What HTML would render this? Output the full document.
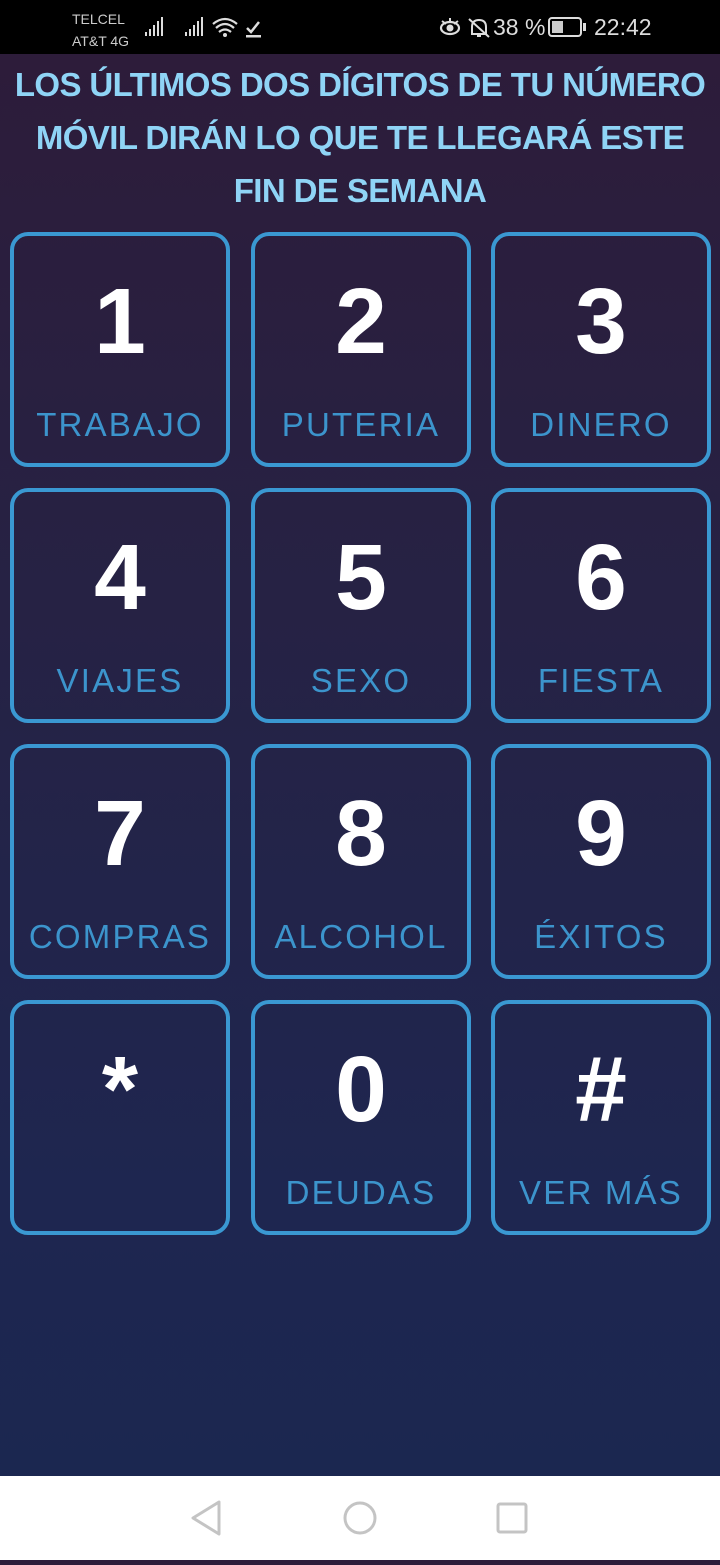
<!DOCTYPE html>
<html><head><meta charset="utf-8"><style>
*{margin:0;padding:0;box-sizing:border-box}
body{width:720px;height:1560px;overflow:hidden;font-family:"Liberation Sans",sans-serif;position:relative;background:linear-gradient(#2d1c3a 54px,#262244 600px,#1e2650 1200px,#1b2750 1476px)}
.sb{position:absolute;top:0;left:0;width:720px;height:54px;background:#000;color:#ddd}
.title{position:absolute;top:58px;left:0;width:720px;text-align:center;color:#8fd4f6;font-weight:bold;font-size:33px;line-height:53px;letter-spacing:-0.6px}
.k{position:absolute;width:220px;height:235px;border:4px solid #3a98d2;border-radius:18px;text-align:center}
.k .d{position:absolute;top:30px;left:0;width:100%;color:#fff;font-weight:bold;font-size:93px;line-height:110px}
.k .l{position:absolute;top:169px;left:0;width:100%;color:#3c94cc;font-size:33px;letter-spacing:2.2px;line-height:40px}
.nav{position:absolute;top:1476px;left:0;width:720px;height:84px;background:#fff}
</style></head><body>
<div class="sb">
<div style="position:absolute;left:72px;top:8px;font-size:14px;line-height:22px;color:#ccc">TELCEL<br>AT&amp;T 4G</div>
<svg style="position:absolute;left:144px;top:16px" width="120" height="24">
<g fill="#ddd"><rect x="1" y="16" width="2" height="4"/><rect x="5" y="13" width="2" height="7"/><rect x="9" y="9" width="2" height="11"/><rect x="13" y="5" width="2" height="15"/><rect x="17" y="1" width="2" height="19"/>
<rect x="41" y="16" width="2" height="4"/><rect x="45" y="13" width="2" height="7"/><rect x="49" y="9" width="2" height="11"/><rect x="53" y="5" width="2" height="15"/><rect x="57" y="1" width="2" height="19"/></g>
<g fill="none" stroke="#ddd" stroke-width="2.2"><path d="M69 8 Q81 -2 93 8"/><path d="M72 12 Q81 4 90 12"/><path d="M75 16 Q81 11 87 16"/></g>
<circle cx="81" cy="19" r="2" fill="#ddd"/>
<path d="M103 12 L107 16 L115 6" stroke="#ddd" stroke-width="2.5" fill="none"/><rect x="102" y="19" width="15" height="2.5" fill="#ddd"/>
</svg>
<svg style="position:absolute;left:438px;top:16px" width="56" height="24"><ellipse cx="12" cy="12" rx="9" ry="6" fill="none" stroke="#ddd" stroke-width="2.2"/><circle cx="12" cy="12" r="3.5" fill="#ddd"/><path d="M4 5 L8 8 M20 5 L16 8 M12 2 L12 5" stroke="#ddd" stroke-width="2"/>
<path d="M34 18 L34 11 Q34 4 41 4 Q48 4 48 11 L48 18 Z M39 20 L43 20 M31 3 L51 21" stroke="#ddd" stroke-width="2" fill="none"/></svg>
<div style="position:absolute;left:493px;top:14px;font-size:23px;color:#ddd">38 %</div>
<svg style="position:absolute;left:548px;top:16px" width="40" height="24"><rect x="1" y="2" width="32" height="18" rx="3" fill="none" stroke="#ddd" stroke-width="2"/><rect x="4" y="5" width="11" height="12" fill="#ccc"/><rect x="35" y="7" width="3" height="8" fill="#ddd"/></svg>
<div style="position:absolute;left:594px;top:14px;font-size:23px;color:#ddd">22:42</div>
</div>
<div class="title">LOS ÚLTIMOS DOS DÍGITOS DE TU NÚMERO<br>MÓVIL DIRÁN LO QUE TE LLEGARÁ ESTE<br>FIN DE SEMANA</div>

<div class="k" style="left:10px;top:232px"><div class="d">1</div><div class="l">TRABAJO</div></div>
<div class="k" style="left:251px;top:232px"><div class="d">2</div><div class="l">PUTERIA</div></div>
<div class="k" style="left:491px;top:232px"><div class="d">3</div><div class="l">DINERO</div></div>
<div class="k" style="left:10px;top:488px"><div class="d">4</div><div class="l">VIAJES</div></div>
<div class="k" style="left:251px;top:488px"><div class="d">5</div><div class="l">SEXO</div></div>
<div class="k" style="left:491px;top:488px"><div class="d">6</div><div class="l">FIESTA</div></div>
<div class="k" style="left:10px;top:744px"><div class="d">7</div><div class="l">COMPRAS</div></div>
<div class="k" style="left:251px;top:744px"><div class="d">8</div><div class="l">ALCOHOL</div></div>
<div class="k" style="left:491px;top:744px"><div class="d">9</div><div class="l">ÉXITOS</div></div>
<div class="k" style="left:10px;top:1000px"><div class="d" style="top:30px">*</div><div class="l"></div></div>
<div class="k" style="left:251px;top:1000px"><div class="d">0</div><div class="l">DEUDAS</div></div>
<div class="k" style="left:491px;top:1000px"><div class="d">#</div><div class="l">VER MÁS</div></div>

<div class="nav">
<svg width="720" height="84"><g fill="none" stroke="#c4c4c4" stroke-width="3" stroke-linejoin="round">
<path d="M219 26 L193 42 L219 58 Z"/><circle cx="360" cy="42" r="15"/><rect x="498" y="28" width="28" height="28" rx="2"/></g></svg>
</div>
</body></html>
